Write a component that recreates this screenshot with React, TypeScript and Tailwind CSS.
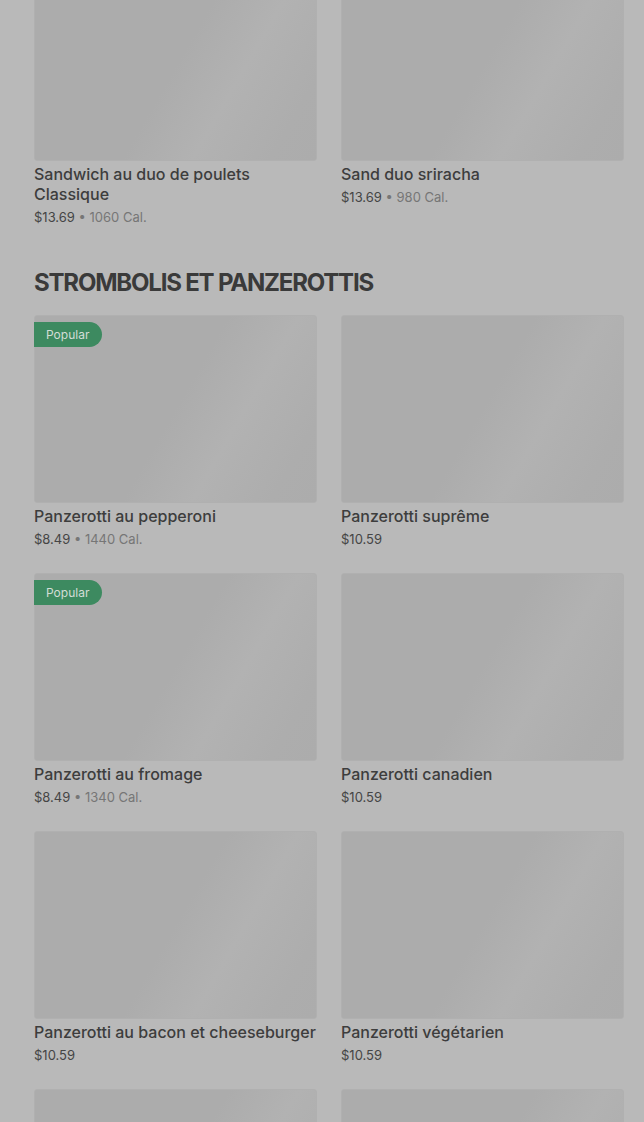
import React from "react";

type Item = { name: string; price: string; cal?: string; popular?: boolean };

const top: Item[] = [
  { name: "Sandwich au duo de poulets Classique", price: "$13.69", cal: "1060 Cal." },
  { name: "Sand duo sriracha", price: "$13.69", cal: "980 Cal." },
];

const items: Item[] = [
  { name: "Panzerotti au pepperoni", price: "$8.49", cal: "1440 Cal.", popular: true },
  { name: "Panzerotti suprême", price: "$10.59" },
  { name: "Panzerotti au fromage", price: "$8.49", cal: "1340 Cal.", popular: true },
  { name: "Panzerotti canadien", price: "$10.59" },
  { name: "Panzerotti au bacon et cheeseburger", price: "$10.59" },
  { name: "Panzerotti végétarien", price: "$10.59" },
  { name: "", price: "" },
  { name: "", price: "" },
];

function Card({ item }: { item: Item }) {
  return (
    <div className="flex flex-col">
      <div className="relative h-[188px] rounded-[3px] border border-[#b0b0b0] bg-[linear-gradient(120deg,#acacac_0%,#acacac_50%,#b2b2b2_68%,#adadad_88%,#acacac_100%)]">
        {item.popular && (
          <div className="absolute left-[-1px] top-[6px] flex h-[25px] items-center rounded-r-full bg-[#3d8a60] pl-[12px] pr-[13px] text-[12px] text-[#d3ddd6]">
            Popular
          </div>
        )}
      </div>
      {item.name && (
        <>
          <div className="mt-[3px] text-[16px] font-medium leading-[20px] text-[#3d3d3d]">{item.name}</div>
          <div className="mt-[3px] text-[13px] leading-[20px] text-[#454545]">
            {item.price}
            {item.cal && <span className="text-[#767676]"> • {item.cal}</span>}
          </div>
        </>
      )}
    </div>
  );
}

export default function App() {
  return (
    <div
      className="h-[1122px] overflow-hidden bg-[#b9b9b9] pl-[34px] pr-[20px]"
      style={{ fontFamily: "Inter, 'Noto Sans', sans-serif" }}
    >
      <div className="-mt-[27px] grid grid-cols-2 gap-x-6">
        {top.map((it, i) => (
          <Card key={i} item={it} />
        ))}
      </div>
      <h2 className="mb-4 mt-10 text-[24px] font-bold leading-[32px] tracking-[-1.2px] text-[#3a3a3a]">
        STROMBOLIS ET PANZEROTTIS
      </h2>
      <div className="grid grid-cols-2 gap-x-6 gap-y-[24px]">
        {items.map((it, i) => (
          <Card key={i} item={it} />
        ))}
      </div>
    </div>
  );
}
